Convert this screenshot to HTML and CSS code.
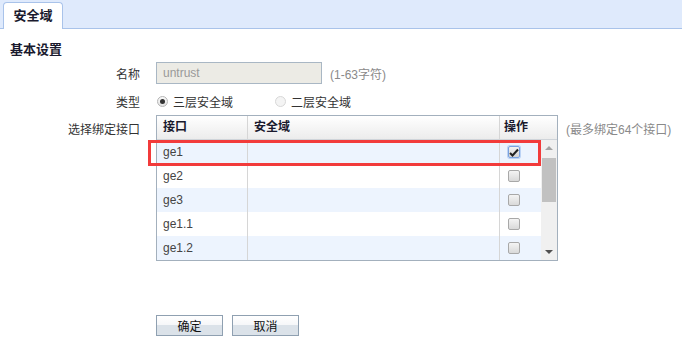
FILE: index.html
```html
<!DOCTYPE html>
<html>
<head>
	<meta charset="utf-8">
	<title>安全域</title>
	<link rel="stylesheet" href="styles.css">
</head>
<body>
	<div class="tabbar">
		<div class="tab">安全域</div>
	</div>

	<div class="section-title">基本设置</div>

	<div class="form">
		<div class="row">
			<label class="label">名称</label>
			<input type="text" class="name-input" value="untrust" disabled>
			<span class="hint">(1-63字符)</span>
		</div>

		<div class="row row-type">
			<label class="label">类型</label>
			<span class="radio checked"></span><span class="radio-text">三层安全域</span>
			<span class="radio second"></span><span class="radio-text">二层安全域</span>
		</div>

		<div class="row row-grid">
			<label class="label grid-label">选择绑定接口</label>
			<div class="grid">
				<div class="grid-head">
					<div class="col-if">接口</div>
					<div class="col-zone">安全域</div>
					<div class="col-op head-op">操作</div>
				</div>
				<div class="grid-body">
					<div class="rows">
						<div class="grid-row alt">
							<div class="col-if">ge1</div>
							<div class="col-zone"></div>
							<div class="col-op"><span class="check checked"><svg width="10" height="9" viewBox="0 0 10 9"><path d="M1 5 L3.5 7.5 L9 1.5" fill="none" stroke="#222" stroke-width="2"/></svg></span></div>
						</div>
						<div class="grid-row">
							<div class="col-if">ge2</div>
							<div class="col-zone"></div>
							<div class="col-op"><span class="check"></span></div>
						</div>
						<div class="grid-row alt">
							<div class="col-if">ge3</div>
							<div class="col-zone"></div>
							<div class="col-op"><span class="check"></span></div>
						</div>
						<div class="grid-row">
							<div class="col-if">ge1.1</div>
							<div class="col-zone"></div>
							<div class="col-op"><span class="check"></span></div>
						</div>
						<div class="grid-row alt">
							<div class="col-if">ge1.2</div>
							<div class="col-zone"></div>
							<div class="col-op"><span class="check"></span></div>
						</div>
					</div>
					<div class="scrollbar">
						<span class="arrow up"></span>
						<span class="thumb"></span>
						<span class="arrow down"></span>
					</div>
				</div>
				<div class="highlight"></div>
			</div>
			<span class="hint grid-hint">(最多绑定64个接口)</span>
		</div>

		<div class="buttons">
			<button class="btn">确定</button>
			<button class="btn">取消</button>
		</div>
	</div>
</body>
</html>
```

FILE: styles.css
```css
body {
	margin: 0;
	padding: 0;
	font-family: "Liberation Sans", "Noto Sans CJK SC", sans-serif;
	font-size: 12px;
	color: #333;
	background: #fff;
}

.tabbar {
	height: 27px;
	background-color: #dfeafc;
	border-bottom: 1px solid #a9c3ea;
	padding-left: 3px;
	padding-top: 1px;
	display: flex;
	align-items: flex-end;
}

.tab {
	width: 58px;
	height: 26px;
	margin-bottom: -1px;
	background-color: #fff;
	border: 1px solid #a9c3ea;
	border-bottom: none;
	border-radius: 4px 4px 0 0;
	text-align: center;
	line-height: 26px;
	font-weight: bold;
	font-size: 13px;
	color: #1a1a2e;
}

.section-title {
	margin: 13px 0 0 10px;
	height: 16px;
	line-height: 16px;
	font-weight: bold;
	font-size: 13px;
	color: #1a1a2e;
}

.form {
	margin-top: 4px;
}

.row {
	display: flex;
	align-items: center;
	height: 22px;
}

.label {
	width: 140px;
	text-align: right;
	margin-right: 16px;
	flex-shrink: 0;
	color: #333;
}

.name-input {
	width: 166px;
	height: 22px;
	box-sizing: border-box;
	border: 1px solid #a9b7c4;
	background-color: #ecebe5;
	padding: 0 6px;
	font-family: "Liberation Sans", "Noto Sans CJK SC", sans-serif;
	font-size: 12px;
	color: #999;
}

.hint {
	margin-left: 8px;
	color: #8a8a8a;
}

.row-type {
	margin-top: 6px;
}

.radio {
	width: 11px;
	height: 11px;
	border-radius: 50%;
	border: 1px solid #b5b5b5;
	background: linear-gradient(#fafafa, #e2e2e2);
	box-sizing: border-box;
	margin-left: 1px;
	position: relative;
}

.radio.checked::after {
	content: "";
	position: absolute;
	left: 2px;
	top: 2px;
	width: 5px;
	height: 5px;
	border-radius: 50%;
	background: #333;
}

.radio.second {
	margin-left: 42px;
	border-color: #d8d8d8;
	background: #f4f4f4;
}

.radio-text {
	margin-left: 5px;
}

.row-grid {
	height: auto;
	align-items: flex-start;
	margin-top: 3px;
}

.grid-label {
	margin-top: 5px;
}

.grid-hint {
	margin-top: 5px;
}

.grid {
	position: relative;
	width: 400px;
	border: 1px solid #a3b0bd;
}

.grid-head {
	display: flex;
	height: 23px;
	line-height: 23px;
	background: linear-gradient(#ffffff, #ececec);
	border-bottom: 1px solid #cfd4d9;
	font-weight: bold;
	color: #1a1a2e;
}

.col-if {
	width: 84px;
	padding-left: 6px;
	border-right: 1px solid #d6d6d6;
}

.col-zone {
	width: 245px;
	padding-left: 6px;
	border-right: 1px solid #d6d6d6;
}

.col-op {
	width: 35px;
	padding-left: 6px;
}

.head-op {
	width: 51px;
	padding-left: 4px;
}

.grid-body {
	display: flex;
}

.rows {
	width: 384px;
}

.grid-row {
	display: flex;
	height: 24px;
	line-height: 24px;
	color: #444;
	background-color: #fff;
}

.grid-row.alt {
	background-color: #edf4fe;
}

.check {
	display: inline-flex;
	align-items: center;
	justify-content: center;
	width: 12px;
	height: 12px;
	margin-left: 2px;
	margin-top: 6px;
	box-sizing: border-box;
	border: 1px solid #a8a8a8;
	border-radius: 2px;
	background: linear-gradient(#f4f4f4, #d9d9d9);
	vertical-align: top;
}

.check.checked {
	border-color: #7aa2e0;
	box-shadow: 0 0 0 1px #bcd3f5;
	background: linear-gradient(#f2f2f2, #d4d4d4);
}

.scrollbar {
	width: 16px;
	height: 120px;
	background-color: #f0f0f0;
	position: relative;
}

.arrow {
	position: absolute;
	left: 4px;
	width: 0;
	height: 0;
	border-left: 4px solid transparent;
	border-right: 4px solid transparent;
}

.arrow.up {
	top: 6px;
	border-bottom: 4px solid #a3a3a3;
}

.arrow.down {
	bottom: 6px;
	border-top: 4px solid #505050;
}

.thumb {
	position: absolute;
	left: 1px;
	top: 18px;
	width: 14px;
	height: 44px;
	background-color: #c1c1c1;
}

.highlight {
	position: absolute;
	left: -9px;
	top: 24px;
	width: 393px;
	height: 26px;
	box-sizing: border-box;
	border: 3px solid #f23b3b;
	pointer-events: none;
}

.buttons {
	margin-top: 54px;
	padding-left: 156px;
	display: flex;
	gap: 9px;
}

.btn {
	width: 67px;
	height: 21px;
	border: 1px solid #8fa0b1;
	background: linear-gradient(#ffffff 0%, #f6f7f9 45%, #dbe2e9 50%, #dbe2e9 100%);
	font-family: "Liberation Sans", "Noto Sans CJK SC", sans-serif;
	font-size: 12px;
	color: #111;
	padding: 0;
	cursor: pointer;
}
```
